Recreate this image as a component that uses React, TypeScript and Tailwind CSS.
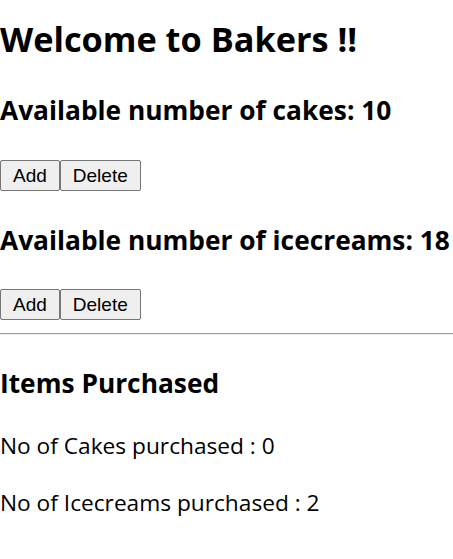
import { useState } from 'react';

const btn =
  "h-[31px] px-[12px] bg-[#efefef] border border-[#767676] rounded-[2px] text-[19px] text-black font-['Liberation_Sans',Arial,sans-serif] leading-none";

export default function App() {
  const [cakes, setCakes] = useState(10);
  const [icecreams, setIcecreams] = useState(18);
  const [cakesBought, setCakesBought] = useState(0);
  const [icecreamsBought, setIcecreamsBought] = useState(2);

  return (
    <div className="font-['Open_Sans','Noto_Sans',sans-serif] text-black bg-white min-h-[559px] pt-px">
      <h1 className="mt-[16px] text-[34.3px] leading-[44px] font-bold">Welcome to Bakers !!</h1>

      <h3 className="mt-[33px] text-[26.3px] leading-[32px] font-bold">Available number of cakes: {cakes}</h3>
      <div className="mt-[34px] flex">
        <button className={btn} onClick={() => setCakes(c => c + 1)}>Add</button>
        <button
          className={btn}
          onClick={() => {
            if (cakes > 0) {
              setCakes(c => c - 1);
              setCakesBought(b => b + 1);
            }
          }}
        >
          Delete
        </button>
      </div>

      <h3 className="mt-[33px] text-[26.3px] leading-[32px] font-bold">Available number of icecreams: {icecreams}</h3>
      <div className="mt-[33px] flex">
        <button className={btn} onClick={() => setIcecreams(c => c + 1)}>Add</button>
        <button
          className={btn}
          onClick={() => {
            if (icecreams > 0) {
              setIcecreams(c => c - 1);
              setIcecreamsBought(b => b + 1);
            }
          }}
        >
          Delete
        </button>
      </div>

      <hr className="mt-[13px] border-0 border-t border-t-[#9a9a9a] border-b border-b-[#eeeeee]" />

      <h3 className="mt-[32px] text-[26.3px] leading-[32px] font-bold">Items Purchased</h3>
      <p className="mt-[33px] text-[22.7px] leading-[28px]">No of Cakes purchased : {cakesBought}</p>
      <p className="mt-[29px] text-[22.7px] leading-[28px]">No of Icecreams purchased : {icecreamsBought}</p>
    </div>
  );
}
